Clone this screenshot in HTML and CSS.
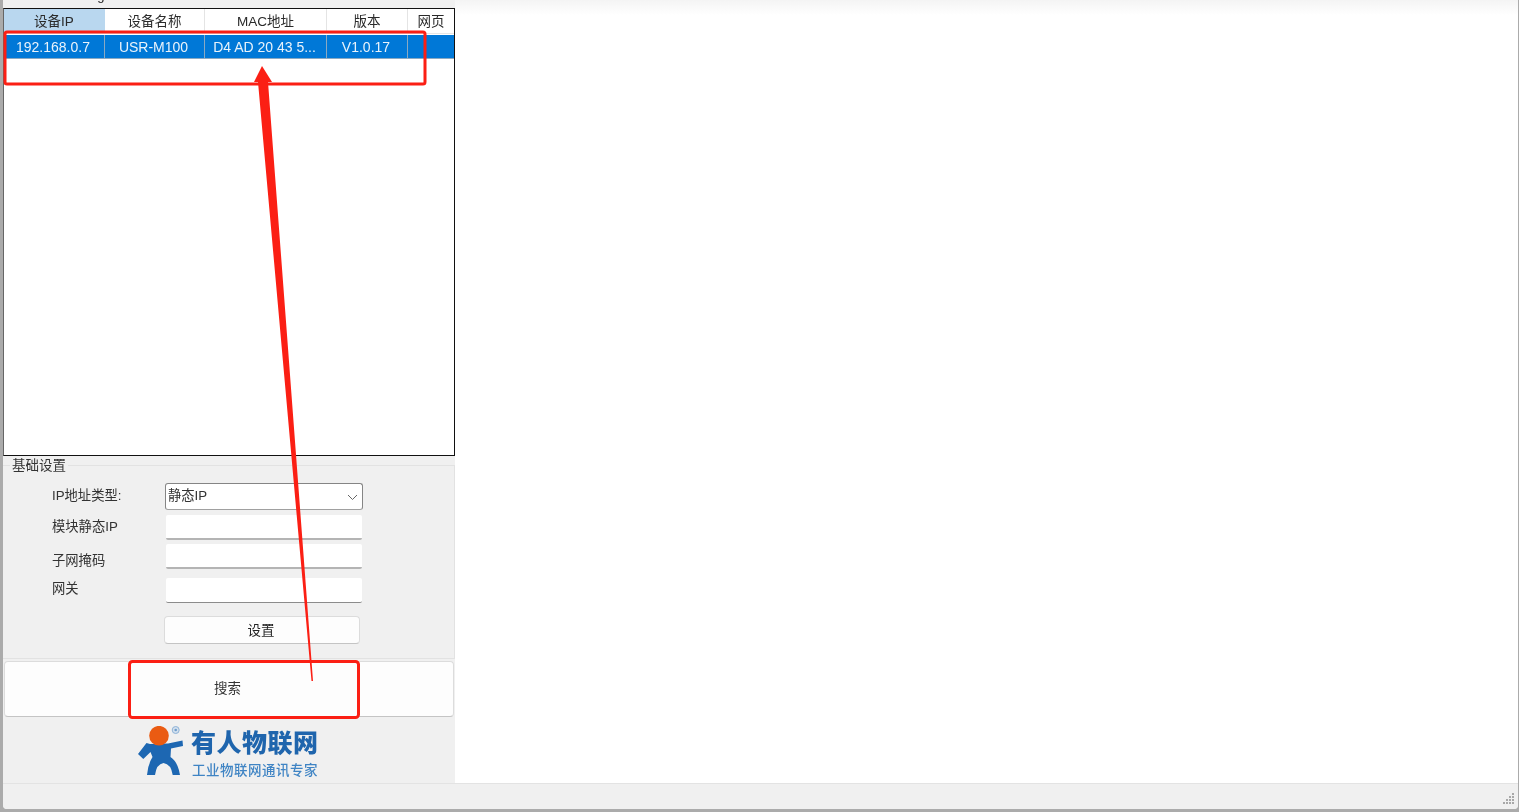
FILE: index.html
```html
<!DOCTYPE html>
<html lang="zh-CN">
<head>
<meta charset="utf-8">
<title>USR-M100 设置工具</title>
<link rel="stylesheet" href="styles.css">
</head>
<body>
<div class="window">
  <div class="content">
    <aside class="side">
      <div class="menu-strip"><span class="menu-text">Config</span></div>
      <div class="device-list">
        <div class="row head">
          <div class="cell c1 sorted">设备IP</div>
          <div class="cell c2">设备名称</div>
          <div class="cell c3">MAC地址</div>
          <div class="cell c4">版本</div>
          <div class="cell c5">网页</div>
        </div>
        <div class="row selected">
          <div class="cell c1">192.168.0.7</div>
          <div class="cell c2">USR-M100</div>
          <div class="cell c3">D4 AD 20 43 5...</div>
          <div class="cell c4">V1.0.17</div>
          <div class="cell c5"></div>
        </div>
      </div>
      <section class="group">
        <div class="group-title">基础设置</div>
        <div class="form">
          <label class="lbl l1">IP地址类型:</label>
          <div class="combo">静态IP
            <svg class="chev" width="11" height="7" viewBox="0 0 11 7"><path d="M1 1l4.5 4.5L10 1" fill="none" stroke="#666" stroke-width="1"/></svg>
          </div>
          <label class="lbl l2">模块静态IP</label>
          <div class="field f2"></div>
          <label class="lbl l3">子网掩码</label>
          <div class="field f3"></div>
          <label class="lbl l4">网关</label>
          <div class="field f4"></div>
        </div>
        <button class="btn set">设置</button>
      </section>
      <button class="btn search">搜索</button>
      <div class="logo">
        <svg class="logo-man" width="48" height="50" viewBox="0 0 48 50">
          <path d="M12 18L30 17.500L44.500 14.500L45 20L33 22.500L32.500 31Q40 36 42 49H34.700Q33 38 25.500 37Q18.500 38 17 49H9Q10 38 14.500 31L12.500 26L5.300 33L0 28L8.500 17Z" fill="#1d67b2"/>
          <circle cx="21" cy="9.700" r="9.800" fill="#ea5b12"/>
          <circle cx="37.700" cy="4" r="3.500" fill="#d3e0ee" stroke="#8eb2d6" stroke-width="1"/>
          <circle cx="37.700" cy="4" r="1.300" fill="#6f9ecb"/>
        </svg>
        <div class="logo-text">
          <div class="logo-main">有人物联网</div>
          <div class="logo-sub">工业物联网通讯专家</div>
        </div>
      </div>
    </aside>
    <main class="pane"></main>
  </div>
  <footer class="status">
    <svg class="grip" width="14" height="14" viewBox="0 0 14 14"><g fill="#a8a8a8"><rect x="10" y="1" width="2" height="2"/><rect x="7" y="4" width="2" height="2"/><rect x="10" y="4" width="2" height="2"/><rect x="4" y="7" width="2" height="2"/><rect x="7" y="7" width="2" height="2"/><rect x="10" y="7" width="2" height="2"/><rect x="1" y="10" width="2" height="2"/><rect x="4" y="10" width="2" height="2"/><rect x="7" y="10" width="2" height="2"/><rect x="10" y="10" width="2" height="2"/></g></svg>
  </footer>
</div>
<svg class="marks" width="1519" height="812" viewBox="0 0 1519 812">
  <rect x="5" y="32" width="420" height="52" rx="2" fill="none" stroke="#fb1f14" stroke-width="3"/>
  <rect x="129.500" y="661.500" width="229" height="56" rx="3" fill="none" stroke="#fb1f14" stroke-width="3"/>
  <path d="M262 66L272 82L268 82L313 681L311.500 681L258 82L254 82Z" fill="#fb1f14"/>
</svg>
</body>
</html>
```
FILE: styles.css
```css
* { box-sizing: border-box; }
html, body { margin: 0; height: 100%; overflow: hidden; }
body {
  background: #ababab;
  font-family: "Liberation Sans", "Noto Sans CJK SC", sans-serif;
  font-size: 13.500px;
  color: #222;
}
.window {
  position: relative;
  width: 1515px;
  height: 809px;
  margin-left: 3px;
  background: #f0f0f0;
  display: flex;
  flex-direction: column;
  border-bottom-right-radius: 4px;
  border-bottom-left-radius: 4px;
  overflow: hidden;
  filter: blur(0.4px);
}
.content { flex: 1; display: flex; min-height: 0; }
.side { width: 452px; display: flex; flex-direction: column; background: #f0f0f0; }
.menu-strip { height: 8px; overflow: hidden; position: relative; }
.menu-text { display: block; margin: -12px 0 0 64px; line-height: 16px; font-size: 13px; }
.device-list {
  height: 448px;
  background: #fff;
  border: 1px solid #111;
  border-left-color: #666;
}
.row { display: flex; }
.head { height: 25px; border-bottom: 1px solid #e6e6e6; }
.cell {
  text-align: center;
  white-space: nowrap;
  overflow: hidden;
  font-size: 13.500px;
  line-height: 26px;
  border-right: 1px solid #e4e4e4;
  color: #2a2a2a;
}
.c1 { width: 101px; }
.c2 { width: 100px; }
.c3 { width: 122px; }
.c4 { width: 81px; }
.c5 { width: 46px; border-right: 0; }
.sorted { background: #b9d7ef; border-right-color: #b9d7ef; }
.selected { height: 24px; background: #0078d7; margin-top: 1px; }
.selected .cell {
  color: #e9f3fb;
  line-height: 25px;
  padding-right: 2px;
  border-right-color: #8aa9c2;
  border-bottom: 1px solid #8aa9c2;
  height: 24px;
  font-size: 14px;
}
.group {
  position: relative;
  height: 203px;
  padding-top: 18px;
  border-bottom: 1px solid #e2e2e2;
}
.group::before {
  content: "";
  position: absolute;
  left: 0; right: 0; top: 9px; bottom: 0;
  border: 1px solid #e2e2e2;
  border-bottom: 0;
  border-left: 0;
}
.group-title {
  position: absolute;
  left: 7px;
  top: 1px;
  padding: 0 2px;
  background: #f0f0f0;
  font-size: 13.500px;
  line-height: 18px;
  color: #333;
}
.form { position: relative; height: 140px; }
.lbl { position: absolute; left: 49px; font-size: 13.300px; line-height: 18px; color: #333; }
.l1 { top: 13px; }
.l2 { top: 44px; }
.l3 { top: 78px; }
.l4 { top: 106px; }
.combo {
  position: absolute;
  left: 162px;
  top: 9px;
  width: 198px;
  height: 27px;
  padding-left: 2px;
  line-height: 23px;
  background: #fff;
  border: 1px solid #858585;
  border-bottom-color: #a0a0a0;
  border-radius: 3px;
  font-size: 13.300px;
  color: #333;
}
.chev { position: absolute; right: 4px; top: 10px; }
.field {
  position: absolute;
  left: 163px;
  width: 196px;
  height: 25px;
  background: #fff;
  border-bottom: 2px solid #b4b4b4;
  border-radius: 2px;
}
.f2 { top: 41px; }
.f3 { top: 70px; }
.f4 { top: 104px; border-bottom-width: 1px; border-bottom-color: #8c8c8c; }
.btn {
  display: block;
  font: inherit;
  color: #222;
  background: #fdfdfd;
  border: 1px solid #dcdcdc;
  border-bottom-color: #c4c4c4;
  border-radius: 4px;
  padding: 0;
}
.set {
  position: absolute;
  left: 161px;
  top: 160px;
  width: 196px;
  height: 28px;
  padding: 0 2px 2px 0;
  font-size: 13.500px;
}
.search {
  width: 450px;
  height: 56px;
  margin: 2px 0 0 1px;
  padding: 0 3px 4px 0;
  font-size: 13.500px;
  color: #333;
}
.logo {
  position: relative;
  flex: 1;
  display: flex;
  align-items: flex-start;
  padding: 9px 0 0 135px;
  gap: 5px;
}
.logo-man { flex: none; }
.logo-text { margin-top: 1px; }
.logo-main {
  font-family: "Noto Sans CJK SC", sans-serif;
  font-weight: 900;
  font-size: 25px;
  line-height: 28px;
  letter-spacing: .5px;
  color: #1f65ad;
  white-space: nowrap;
}
.logo-sub {
  font-family: "Noto Sans CJK SC", sans-serif;
  font-weight: 500;
  font-size: 13.500px;
  line-height: 16px;
  letter-spacing: .5px;
  margin: 6px 0 0 1px;
  color: #3f84c4;
  white-space: nowrap;
}
.pane {
  flex: 1;
  background: linear-gradient(#f4f4f4 0, #fff 15px);
}
.status {
  position: relative;
  flex: none;
  height: 26px;
  background: #f0f0f0;
  border-top: 1px solid #e3e3e3;
}
.grip { position: absolute; right: 2px; bottom: 3px; }
.marks { position: absolute; left: 0; top: 0; pointer-events: none; }
```
